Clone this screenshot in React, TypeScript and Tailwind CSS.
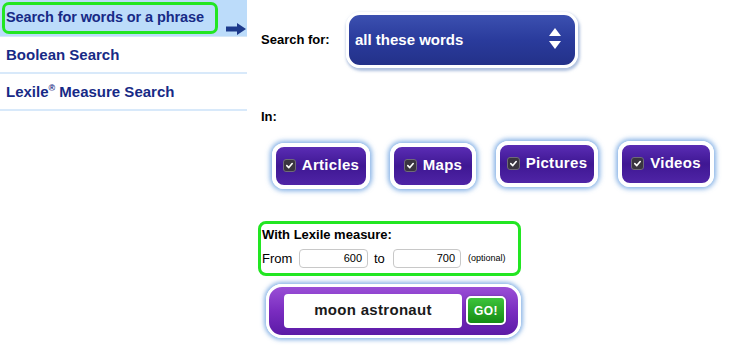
import React from "react";

const font = { fontFamily: "'Liberation Sans', Arial, sans-serif" };

function Check() {
  return (
    <span className="flex h-[13px] w-[13px] items-center justify-center rounded-[3px] bg-[#3a3540] border border-[#6f6a78]">
      <svg viewBox="0 0 10 10" className="h-[9px] w-[9px]">
        <path d="M2 5.2 L4.2 7.3 L8 2.8" fill="none" stroke="#fff" strokeWidth="1.8" strokeLinecap="round" strokeLinejoin="round" />
      </svg>
    </span>
  );
}

function TypeButton({ label, w, mt }: { label: string; w: string; mt: string }) {
  return (
    <div className={`${w} ${mt} h-[46px] rounded-[12px] border-[4px] border-white bg-gradient-to-b from-[#5a2cb4] via-[#3f1793] to-[#4f24a6] shadow-[0_0_5px_2px_rgba(90,150,220,0.75)] flex items-center justify-center gap-[6px] text-white font-bold text-[15px] tracking-[0.3px]`}>
      <Check />
      <span>{label}</span>
    </div>
  );
}

export default function App() {
  return (
    <div className="flex h-[345px] w-[750px] bg-white overflow-hidden" style={font}>
      {/* left menu */}
      <aside className="w-[247px] shrink-0">
        <div className="relative h-[37px] bg-[#bcdcfa] border-b border-[#d6e8f8] pt-[2px] pl-[2px]">
          <div className="h-[32px] w-[216px] rounded-[7px] border-[3px] border-[#22e622] flex items-center pl-[1px] whitespace-nowrap text-[14.5px] tracking-[-0.1px] font-bold text-[#172a86]">
            Search for words or a phrase
          </div>
          <svg viewBox="0 0 20 12" className="absolute left-[226px] top-[23px] h-[12px] w-[20px]">
            <path d="M0 3.5 H11 V0 L20 6 L11 12 V8.5 H0 Z" fill="#1d3a8c" />
          </svg>
        </div>
        <div className="h-[37px] border-b-2 border-[#d8e9fa] flex items-center pl-[6px] pt-[2px] text-[15px] font-bold text-[#172a86]">
          Boolean Search
        </div>
        <div className="h-[37px] border-b-2 border-[#d8e9fa] flex items-center pl-[6px] pt-[2px] text-[15px] font-bold text-[#172a86]">
          Lexile<sup className="text-[9px] -top-[5px]">®</sup>&nbsp;Measure Search
        </div>
      </aside>

      {/* right form */}
      <main className="flex-1 pl-[14px] text-black">
        <div className="flex items-center mt-[12px]">
          <span className="w-[85px] text-[13px] font-bold">Search for:</span>
          <div className="relative h-[56px] w-[232px] rounded-[14px] border-[3px] border-white bg-gradient-to-b from-[#3c50b0] via-[#2a3b9c] to-[#233189] shadow-[1px_2px_3px_1px_rgba(120,150,200,0.6)] flex items-center pl-[6px] text-white font-bold text-[15px]">
            all these words
            <svg viewBox="0 0 12 22" className="absolute right-[14px] top-[13px] h-[22px] w-[12px]">
              <path d="M6 0 L12 8 H0 Z" fill="#fff" />
              <path d="M0 13 H12 L6 21 Z" fill="#fff" />
            </svg>
          </div>
        </div>

        <div className="mt-[39px] text-[13px] font-bold">In:</div>

        <div className="flex mt-[14px] pl-[11px] gap-[20px]">
          <TypeButton label="Articles" w="w-[98px]" mt="mt-[2px]" />
          <TypeButton label="Maps" w="w-[86px]" mt="mt-[2px]" />
          <TypeButton label="Pictures" w="w-[102px]" mt="mt-0" />
          <TypeButton label="Videos" w="w-[96px]" mt="mt-0" />
        </div>

        <div className="mt-[32px] -ml-[3px] w-[263px] h-[55px] rounded-[8px] border-[3px] border-[#22e622] px-[1px] pt-[1px]">
          <div className="text-[13px] font-bold">With Lexile measure:</div>
          <div className="flex items-center mt-[5px] text-[13px]">
            <span className="w-[37px]">From</span>
            <div className="h-[19px] w-[69px] rounded-[4px] border border-[#c8c8c8] text-right pr-[5px] text-[11px] leading-[17px]">600</div>
            <span className="ml-[6px] w-[19px]">to</span>
            <div className="h-[19px] w-[68px] rounded-[4px] border border-[#c8c8c8] text-right pr-[5px] text-[11px] leading-[17px]">700</div>
            <span className="ml-[7px] text-[9px]">(optional)</span>
          </div>
        </div>

        <div className="mt-[8px] ml-[5px] h-[54px] w-[255px] rounded-[16px] border-[3px] border-white bg-gradient-to-b from-[#9a4ed6] via-[#7a2cc0] to-[#5b1aa6] shadow-[0_0_4px_2px_rgba(90,150,220,0.7)] flex items-center pl-[15px] gap-[4px]">
          <div className="h-[34px] w-[178px] rounded-[4px] bg-white flex items-center justify-center text-[15px] font-bold text-[#1a1a1a] tracking-[0.3px]">
            moon astronaut
          </div>
          <div className="h-[29px] w-[40px] rounded-[5px] border-2 border-white bg-gradient-to-b from-[#3cc43a] to-[#148c14] flex items-center justify-center text-white text-[12px] font-bold tracking-[0.5px] shadow-[0_0_2px_rgba(0,0,0,0.3)]">
            GO!
          </div>
        </div>
      </main>
    </div>
  );
}
